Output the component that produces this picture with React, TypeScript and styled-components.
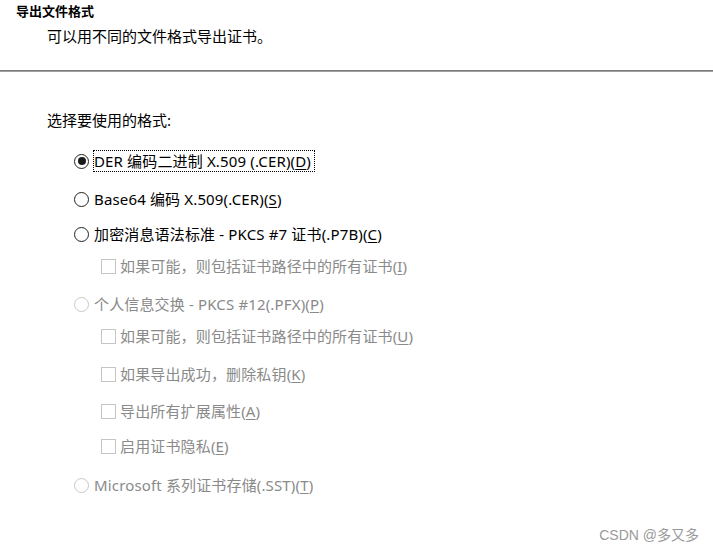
import React from "react";
import styled, { createGlobalStyle } from "styled-components";

const Global = createGlobalStyle`
  html, body { margin: 0; padding: 0; background: #fff; }
  body {
    font-family: "Noto Sans", "Noto Sans CJK SC", sans-serif;
    color: #000;
  }
`;

const Page = styled.div`
  width: 713px;
  height: 551px;
  display: flex;
  flex-direction: column;
  position: relative;
  overflow: hidden;
`;

const Header = styled.header`
  display: flex;
  flex-direction: column;
  padding: 2px 0 0 16px;
  height: 70px;
  box-sizing: border-box;
`;

const Title = styled.h1`
  margin: 0;
  font-size: 13px;
  font-weight: 700;
  line-height: 18px;
  font-family: "Noto Sans CJK SC", sans-serif;
`;

const Subtitle = styled.p`
  margin: 6px 0 0 31px;
  font-size: 15px;
  line-height: 20px;
  font-family: "Noto Sans CJK SC", sans-serif;
`;

const Divider = styled.hr`
  margin: 0;
  border: none;
  height: 2px;
  background: linear-gradient(#7a7a7a 0 1px, #a0a0a0 1px 2px);
`;

const Body = styled.section`
  display: flex;
  flex-direction: column;
  padding: 37px 0 0 47px;
`;

const Prompt = styled.div`
  font-size: 15px;
  line-height: 22px;
  font-family: "Noto Sans", "Noto Sans CJK SC", sans-serif;
`;

const Options = styled.div`
  display: flex;
  flex-direction: column;
  margin-top: 19px;
`;

const Row = styled.label<{ $indent?: boolean; $top: number; $disabled?: boolean }>`
  display: flex;
  align-items: center;
  height: 22px;
  margin-top: ${(p) => p.$top}px;
  margin-left: ${(p) => (p.$indent ? 54 : 27)}px;
  font-size: 15px;
  color: ${(p) => (p.$disabled ? "#8a8a8a" : "#000")};
  white-space: nowrap;
`;

const RadioMark = styled.span<{ $checked?: boolean; $disabled?: boolean }>`
  width: 15px;
  height: 15px;
  box-sizing: border-box;
  border-radius: 50%;
  border: 1.3px solid ${(p) => (p.$disabled ? "#c8c8c8" : "#222")};
  display: flex;
  align-items: center;
  justify-content: center;
  flex-shrink: 0;
  margin-right: 6px;
  &::after {
    content: "";
    display: ${(p) => (p.$checked ? "block" : "none")};
    width: 8px;
    height: 8px;
    border-radius: 50%;
    background: #1a1a1a;
  }
`;

const CheckMark = styled.span`
  width: 15px;
  height: 15px;
  box-sizing: border-box;
  border: 1px solid #c4c4c4;
  flex-shrink: 0;
  margin-right: 5px;
`;

const Text = styled.span<{ $focused?: boolean }>`
  line-height: 20px;
  padding: 0 3px 0 0;
  margin-left: -1px;
  letter-spacing: 0.15px;
  outline: ${(p) => (p.$focused ? "1px dotted #000" : "none")};
  outline-offset: 0px;
  u { text-decoration: underline; text-underline-offset: 2px; }
`;

const Watermark = styled.div`
  position: absolute;
  right: 14px;
  bottom: 7px;
  font-family: "Liberation Sans", "Noto Sans CJK SC", sans-serif;
  font-size: 14px;
  color: #9a9a9a;
`;

type Opt = {
  kind: "radio" | "check";
  label: string;
  key: string;
  top: number;
  checked?: boolean;
  disabled?: boolean;
  focused?: boolean;
};

const opts: Opt[] = [
  { kind: "radio", label: "DER 编码二进制 X.509 (.CER)", key: "D", top: 0, checked: true, focused: true },
  { kind: "radio", label: "Base64 编码 X.509(.CER)", key: "S", top: 16 },
  { kind: "radio", label: "加密消息语法标准 - PKCS #7 证书(.P7B)", key: "C", top: 13 },
  { kind: "check", label: "如果可能，则包括证书路径中的所有证书", key: "I", top: 10, disabled: true },
  { kind: "radio", label: "个人信息交换 - PKCS #12(.PFX)", key: "P", top: 16, disabled: true },
  { kind: "check", label: "如果可能，则包括证书路径中的所有证书", key: "U", top: 10, disabled: true },
  { kind: "check", label: "如果导出成功，删除私钥", key: "K", top: 16, disabled: true },
  { kind: "check", label: "导出所有扩展属性", key: "A", top: 15, disabled: true },
  { kind: "check", label: "启用证书隐私", key: "E", top: 13, disabled: true },
  { kind: "radio", label: "Microsoft 系列证书存储(.SST)", key: "T", top: 17, disabled: true },
];

export default function App() {
  return (
    <Page>
      <Global />
      <Header>
        <Title>导出文件格式</Title>
        <Subtitle>可以用不同的文件格式导出证书。</Subtitle>
      </Header>
      <Divider />
      <Body>
        <Prompt>选择要使用的格式:</Prompt>
        <Options>
          {opts.map((o, i) => (
            <Row key={i} $top={o.top} $indent={o.kind === "check"} $disabled={o.disabled}>
              {o.kind === "radio" ? (
                <RadioMark $checked={o.checked} $disabled={o.disabled} />
              ) : (
                <CheckMark />
              )}
              <Text $focused={o.focused}>
                {o.label}(<u>{o.key}</u>)
              </Text>
            </Row>
          ))}
        </Options>
      </Body>
      <Watermark>CSDN @多又多</Watermark>
    </Page>
  );
}
